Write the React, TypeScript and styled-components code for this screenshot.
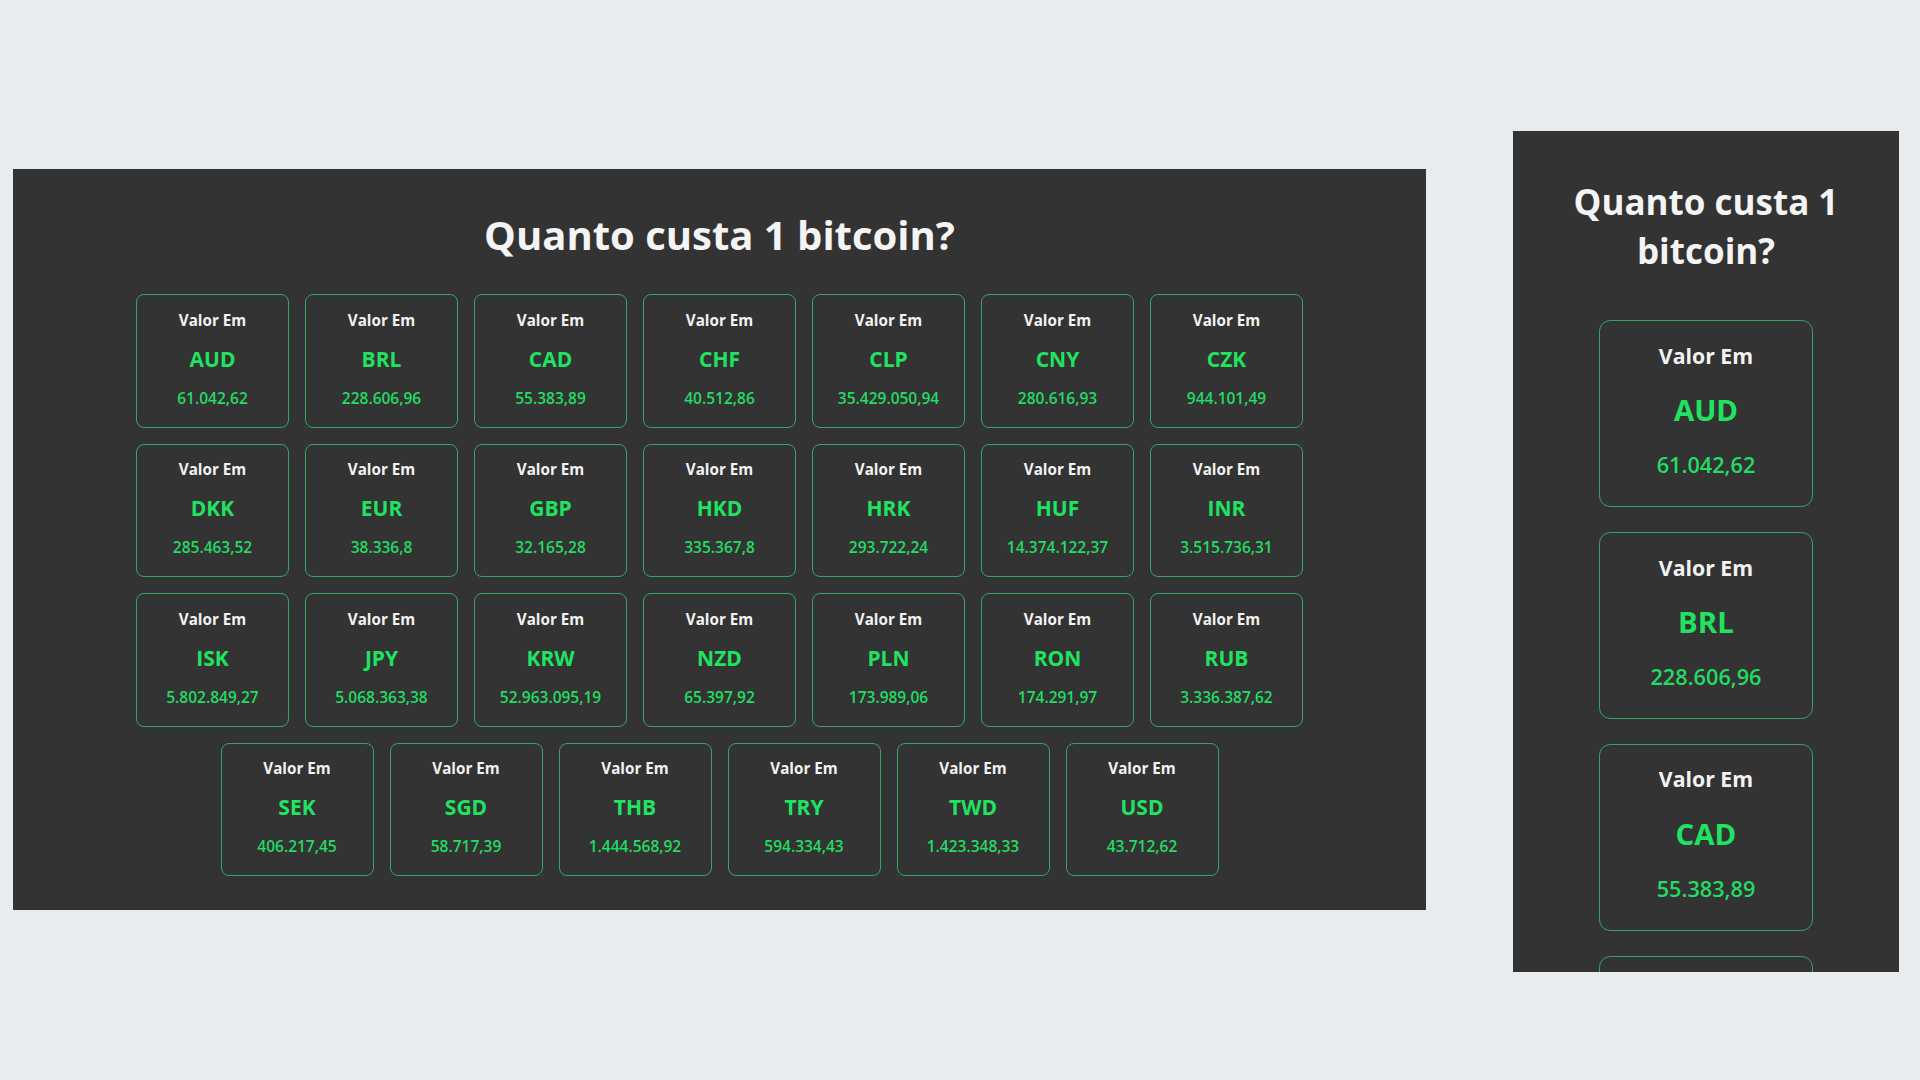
import React from "react";
import styled, { createGlobalStyle } from "styled-components";

const GlobalStyle = createGlobalStyle`
  html, body {
    margin: 0;
    padding: 0;
    background: #e9ecee;
    font-family: "Open Sans", "Noto Sans", sans-serif;
  }
  * { box-sizing: border-box; }
`;

type Rate = { code: string; value: string };

const rates: Rate[] = [
  { code: "AUD", value: "61.042,62" },
  { code: "BRL", value: "228.606,96" },
  { code: "CAD", value: "55.383,89" },
  { code: "CHF", value: "40.512,86" },
  { code: "CLP", value: "35.429.050,94" },
  { code: "CNY", value: "280.616,93" },
  { code: "CZK", value: "944.101,49" },
  { code: "DKK", value: "285.463,52" },
  { code: "EUR", value: "38.336,8" },
  { code: "GBP", value: "32.165,28" },
  { code: "HKD", value: "335.367,8" },
  { code: "HRK", value: "293.722,24" },
  { code: "HUF", value: "14.374.122,37" },
  { code: "INR", value: "3.515.736,31" },
  { code: "ISK", value: "5.802.849,27" },
  { code: "JPY", value: "5.068.363,38" },
  { code: "KRW", value: "52.963.095,19" },
  { code: "NZD", value: "65.397,92" },
  { code: "PLN", value: "173.989,06" },
  { code: "RON", value: "174.291,97" },
  { code: "RUB", value: "3.336.387,62" },
  { code: "SEK", value: "406.217,45" },
  { code: "SGD", value: "58.717,39" },
  { code: "THB", value: "1.444.568,92" },
  { code: "TRY", value: "594.334,43" },
  { code: "TWD", value: "1.423.348,33" },
  { code: "USD", value: "43.712,62" },
];

const Page = styled.div`
  display: flex;
  align-items: flex-start;
  padding-left: 13px;
  gap: 87px;
  min-height: 1080px;
`;

const Panel = styled.section<{ $top: number; $width: number; $height: number }>`
  margin-top: ${(p) => p.$top}px;
  width: ${(p) => p.$width}px;
  height: ${(p) => p.$height}px;
  background: #333333;
  overflow: hidden;
  display: flex;
  flex-direction: column;
  align-items: center;
`;

const Title = styled.h1<{ $size: number; $lh: number; $pad: number; $gap: number; $width?: number }>`
  margin: ${(p) => p.$pad}px 0 ${(p) => p.$gap}px;
  font-size: ${(p) => p.$size}px;
  line-height: ${(p) => p.$lh}px;
  font-weight: 700;
  color: #f4f4f4;
  text-align: center;
  ${(p) => (p.$width ? `width: ${p.$width}px;` : "")}
`;

const Grid = styled.div<{ $width: number; $gap: number }>`
  width: ${(p) => p.$width}px;
  display: flex;
  flex-wrap: wrap;
  justify-content: center;
  gap: ${(p) => p.$gap}px;
`;

const Card = styled.div<{ $s: number }>`
  width: ${(p) => 153 * p.$s}px;
  height: ${(p) => 133.5 * p.$s}px;
  flex-shrink: 0;
  border: 1px solid #35a565;
  border-radius: ${(p) => 8 * p.$s}px;
  padding-top: ${(p) => 5.5 * p.$s}px;
  display: flex;
  flex-direction: column;
  align-items: center;
`;

const Label = styled.div<{ $s: number }>`
  height: ${(p) => 39 * p.$s}px;
  line-height: ${(p) => 39 * p.$s}px;
  font-size: ${(p) => 15.2 * p.$s}px;
  font-weight: 700;
  color: #f2f2f2;
  white-space: nowrap;
`;

const Code = styled.div<{ $s: number }>`
  height: ${(p) => 39 * p.$s}px;
  line-height: ${(p) => 39 * p.$s}px;
  font-size: ${(p) => 21 * p.$s}px;
  font-weight: 700;
  color: #1fe361;
`;

const Value = styled.div<{ $s: number }>`
  height: ${(p) => 39 * p.$s}px;
  line-height: ${(p) => 39 * p.$s}px;
  font-size: ${(p) => 15.5 * p.$s}px;
  font-weight: 600;
  color: #22dc63;
  white-space: nowrap;
`;

const RateCard: React.FC<{ rate: Rate; s: number }> = ({ rate, s }) => (
  <Card $s={s}>
    <Label $s={s}>Valor Em</Label>
    <Code $s={s}>{rate.code}</Code>
    <Value $s={s}>{rate.value}</Value>
  </Card>
);

export default function App() {
  return (
    <>
      <GlobalStyle />
      <Page>
        <Panel $top={169} $width={1413} $height={741}>
          <Title $size={40} $lh={48} $pad={42} $gap={35}>
            Quanto custa 1 bitcoin?
          </Title>
          <Grid $width={1167} $gap={16}>
            {rates.map((r) => (
              <RateCard key={r.code} rate={r} s={1} />
            ))}
          </Grid>
        </Panel>
        <Panel $top={131} $width={386} $height={841}>
          <Title $size={35} $lh={49} $pad={46} $gap={45} $width={300}>
            Quanto custa 1 bitcoin?
          </Title>
          <Grid $width={215} $gap={25}>
            {rates.map((r) => (
              <RateCard key={r.code} rate={r} s={1.4} />
            ))}
          </Grid>
        </Panel>
      </Page>
    </>
  );
}
